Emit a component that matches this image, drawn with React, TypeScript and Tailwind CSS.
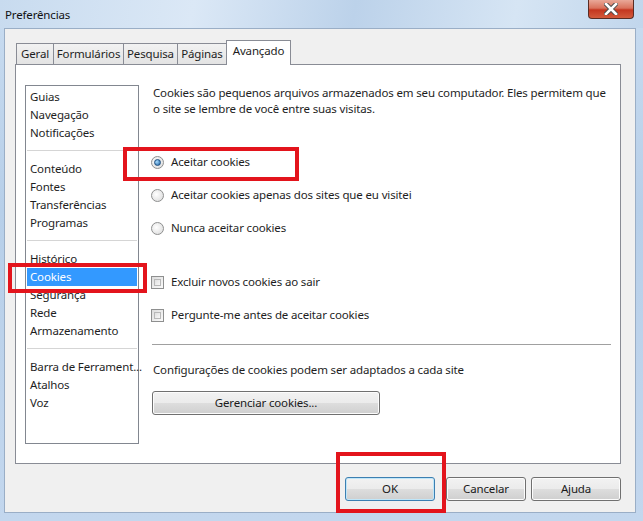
import React from 'react';

const listGroups: string[][] = [
  ['Guias', 'Navegação', 'Notificações'],
  ['Conteúdo', 'Fontes', 'Transferências', 'Programas'],
  ['Histórico', 'Cookies', 'Segurança', 'Rede', 'Armazenamento'],
  ['Barra de Ferrament...', 'Atalhos', 'Voz'],
];

const tabs: { label: string; w: string }[] = [
  { label: 'Geral', w: 'w-[37px]' },
  { label: 'Formulários', w: 'w-[70px]' },
  { label: 'Pesquisa', w: 'w-[54px]' },
  { label: 'Páginas', w: 'w-[49px]' },
];

const Radio: React.FC<{ checked?: boolean; label: string }> = ({ checked, label }) => (
  <div className="flex items-center h-[18px]">
    <span className="w-[13px] h-[13px] ml-[-1px] rounded-full border border-[#8e8f8f] bg-[radial-gradient(circle_at_40%_40%,#ffffff,#d8d8d8)] flex items-center justify-center">
      {checked && (
        <span className="w-[7px] h-[7px] rounded-full border border-[#1f4f7f] bg-[radial-gradient(circle_at_35%_35%,#a8dcff,#1a5fa0)]" />
      )}
    </span>
    <span className="ml-[7px]">{label}</span>
  </div>
);

const Check: React.FC<{ label: string }> = ({ label }) => (
  <div className="flex items-center h-[18px]">
    <span className="w-[13px] h-[13px] ml-[-1px] border border-[#8e8f8f] bg-[linear-gradient(135deg,#dcdcdc,#fbfbfb)] p-[2px]">
      <span className="block w-full h-full border border-[#b8b8b8] bg-[linear-gradient(135deg,#e0e0e0,#f7f7f7)]" />
    </span>
    <span className="ml-[7px]">{label}</span>
  </div>
);

const WinButton: React.FC<{ label: string; width: string; isDefault?: boolean }> = ({ label, width, isDefault }) => (
  <div
    className={`${width} h-[24px] rounded-[3px] border ${
      isDefault ? 'border-[#3c7fb1] shadow-[inset_0_0_0_1px_#bfe6f9]' : 'border-[#707070] shadow-[inset_0_0_0_1px_#fcfcfc]'
    } bg-[linear-gradient(to_bottom,#f2f2f2_0%,#ebebeb_50%,#dddddd_51%,#cfcfcf_100%)] flex items-center justify-center text-[#1a1a1a]`}
  >
    {label}
  </div>
);

export default function App() {
  return (
    <div className="relative w-[643px] h-[521px] overflow-hidden flex flex-col bg-[linear-gradient(to_bottom,#c9dcf0,#b7cfe9_40%,#c3d7ee)] font-['Noto_Sans',sans-serif] text-[11.5px] tracking-[-0.15px] text-[#1e1e1e] leading-[16px]">
      {/* title bar */}
      <div className="h-[28px] flex items-center pl-[5px] shrink-0 bg-[linear-gradient(100deg,#c8dbef_0%,#dbe8f6_30%,#bcd2ea_55%,#d6e5f4_80%,#c1d6ec_100%)]">
        <span className="text-[#111] mt-[2px]">Preferências</span>
      </div>
      <div className="absolute top-0 right-[9px] w-[46px] h-[19px] rounded-b-[4px] border border-t-0 border-[#5a2c24] bg-[linear-gradient(to_bottom,#e9a898_0%,#d9725c_45%,#c4361f_55%,#d35a3c_100%)] flex items-center justify-center">
        <svg width="14" height="12" viewBox="0 0 14 12">
          <path d="M2 1 L12 11 M12 1 L2 11" stroke="#4a4a4a" strokeWidth="4.5" strokeLinecap="square" />
          <path d="M2 1 L12 11 M12 1 L2 11" stroke="#ffffff" strokeWidth="2.6" strokeLinecap="square" />
        </svg>
      </div>

      {/* client area */}
      <div className="flex-1 ml-[4px] mr-[7px] mb-[8px] bg-[#f0f0f0] border border-[#9aaec6] flex flex-col pl-[10px] pr-[14px] pt-[10px]">
        {/* tabs */}
        <div className="flex items-end h-[25px] pl-[1px]">
          {tabs.map((t) => (
            <div
              key={t.label}
              className={`${t.w} h-[21px] border border-b-0 border-r-0 border-[#898c95] bg-[linear-gradient(to_bottom,#f2f2f2,#e3e3e3)] flex items-center justify-center`}
            >
              {t.label}
            </div>
          ))}
          <div className="w-[65px] h-[25px] border border-b-0 border-[#898c95] bg-white flex justify-center pt-[2px] relative top-[1px] z-10">
            Avançado
          </div>
        </div>

        {/* panel */}
        <div className="h-[400px] border border-[#898c95] bg-white flex pl-[9px] pt-[20px] pb-[19px]">
          <div className="w-[114px] border border-[#828790] bg-white flex flex-col pt-[2px] px-[1px]">
            {listGroups.map((g, gi) => (
              <div key={gi} className={gi > 0 ? 'border-t border-[#d5d5d5] mt-[8px] pt-[9px]' : ''}>
                {g.map((item) => (
                  <div
                    key={item}
                    className={`h-[18px] flex items-center pl-[3px] whitespace-nowrap ${
                      item === 'Cookies' ? 'bg-[#3399ff] text-white' : ''
                    }`}
                  >
                    {item}
                  </div>
                ))}
              </div>
            ))}
          </div>

          <div className="ml-[13px] flex flex-col w-[459px] whitespace-nowrap">
            <p className="pl-[1px]">
              Cookies são pequenos arquivos armazenados em seu computador. Eles permitem que
              <br />o site se lembre de você entre suas visitas.
            </p>
            <div className="mt-[36px] flex flex-col gap-[15px]">
              <Radio checked label="Aceitar cookies" />
              <Radio label="Aceitar cookies apenas dos sites que eu visitei" />
              <Radio label="Nunca aceitar cookies" />
            </div>
            <div className="mt-[36px] flex flex-col gap-[15px]">
              <Check label="Excluir novos cookies ao sair" />
              <Check label="Pergunte-me antes de aceitar cookies" />
            </div>
            <div className="mt-[20px] border-t border-[#a0a0a0]" />
            <p className="mt-[17px] pl-[1px]">Configurações de cookies podem ser adaptados a cada site</p>
            <div className="mt-[13px]">
              <WinButton label="Gerenciar cookies..." width="w-[228px]" />
            </div>
          </div>
        </div>

        {/* bottom buttons */}
        <div className="flex justify-end gap-[11px] mt-[13px]">
          <WinButton label="OK" width="w-[90px]" isDefault />
          <div className="flex gap-[5px]">
            <WinButton label="Cancelar" width="w-[80px]" />
            <WinButton label="Ajuda" width="w-[90px]" />
          </div>
        </div>
      </div>

      {/* red annotation boxes */}
      <div className="absolute left-[123px] top-[147px] w-[176px] h-[34px] border-[4px] border-[#e3141c]" />
      <div className="absolute left-[8px] top-[263px] w-[139px] h-[30px] border-[4px] border-[#e3141c]" />
      <div className="absolute left-[336px] top-[452px] w-[110px] h-[61px] border-[4px] border-[#e3141c]" />
    </div>
  );
}
